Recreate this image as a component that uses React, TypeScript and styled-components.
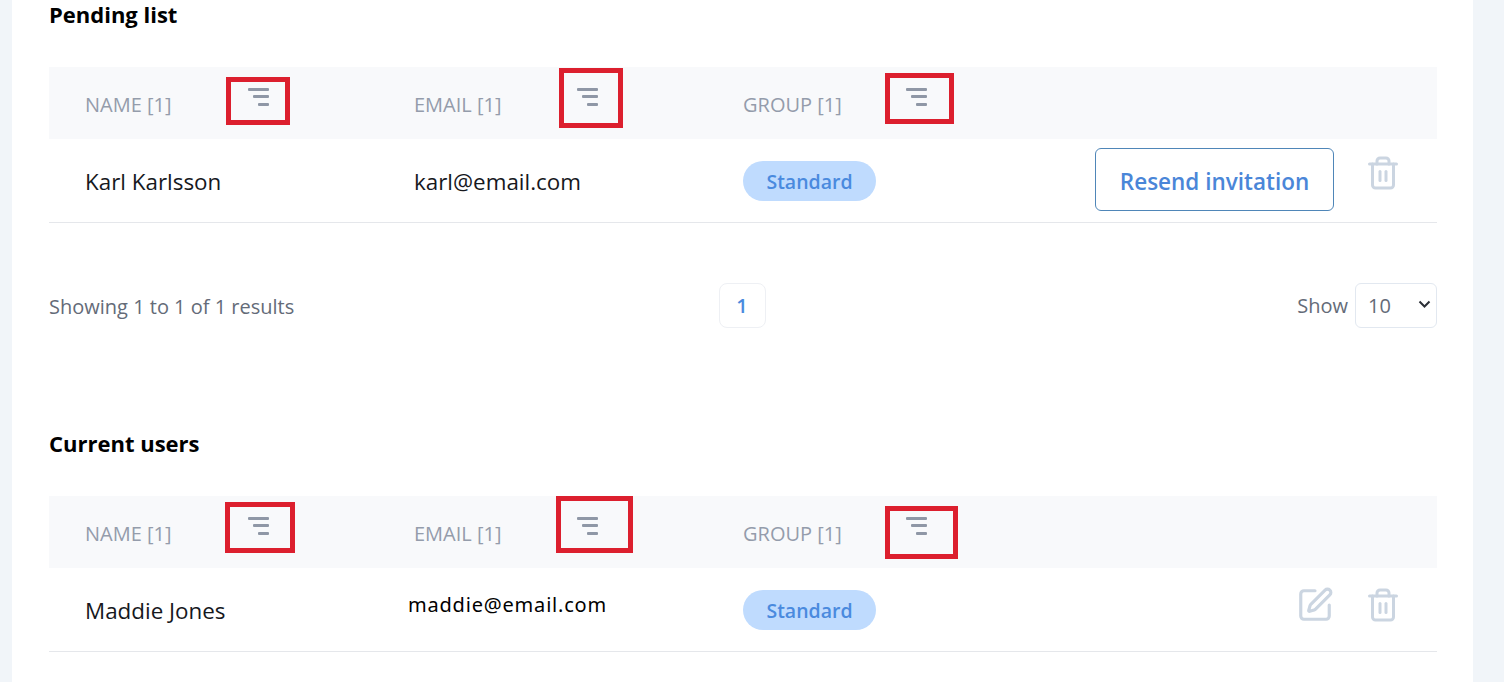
import { SquarePen, Trash2 } from 'lucide-react'
import styled, { createGlobalStyle } from 'styled-components'

type Box = {
  left: number
  top: number
  width: number
  height: number
}

const GlobalStyle = createGlobalStyle`
  html, body {
    margin: 0;
    height: 100%;
    overflow: hidden;
    background: #f1f5f9;
  }
`

const Page = styled.div`
  height: 682px;
  padding: 0 31px 0 12px;
  font-family: 'Open Sans', 'Noto Sans', sans-serif;
  overflow: hidden;
`

const Card = styled.main`
  height: 100%;
  padding: 0 36px 0 37px;
  background: #fff;
`

const SectionTitle = styled.h2`
  height: 30px;
  margin: 0 0 37px;
  font-size: 22px;
  font-weight: 700;
  line-height: 28px;
  color: #000;
`

const HeaderRow = styled.div`
  display: grid;
  grid-template-columns: 329px 329px 329px 1fr;
  align-items: center;
  height: 72px;
  background: #f8f9fb;
`

const HeaderCell = styled.div`
  display: flex;
  align-items: center;
  padding-left: 36px;
  font-size: 20px;
  font-weight: 500;
  color: #949cab;
`

const HeaderLabel = styled.span`
  width: 163px;
  flex: none;
  padding-top: 2px;
  box-sizing: border-box;
`

const FilterWrap = styled.span`
  position: relative;
  display: block;
  width: 21px;
  height: 18px;
  margin-top: -13px;
`

const FilterBars = styled.svg`
  display: block;
`

const Marker = styled.span<{ $box: Box }>`
  position: absolute;
  left: ${(p) => p.$box.left}px;
  top: ${(p) => p.$box.top}px;
  width: ${(p) => p.$box.width}px;
  height: ${(p) => p.$box.height}px;
  box-sizing: border-box;
  border: 5px solid #dc1f2e;
`

const BodyRow = styled.div`
  display: grid;
  grid-template-columns: 329px 329px 329px 1fr;
  align-items: center;
  height: 83px;
  border-bottom: 1px solid #e5e7eb;
`

const Cell = styled.div`
  padding: 1px 0 0 36px;
  font-size: 22.4px;
  color: #16181d;
`

const PastedEmail = styled.div`
  padding: 0 0 10px 30px;
  font-family: 'Noto Sans', 'Open Sans', sans-serif;
  font-size: 20px;
  letter-spacing: 0.8px;
  color: #000;
`

const Badge = styled.span`
  display: inline-flex;
  align-items: center;
  justify-content: center;
  width: 133px;
  height: 40px;
  padding-top: 1px;
  box-sizing: border-box;
  border-radius: 20px;
  background: #bfdbfe;
  font-size: 19.5px;
  font-weight: 600;
  color: #4a8ade;
`

const Actions = styled.div`
  display: flex;
  align-items: center;
  justify-content: flex-end;
  gap: 31px;
  padding-right: 36px;
`

const ResendButton = styled.button`
  width: 239px;
  height: 63px;
  margin-bottom: 2px;
  padding: 4px 0 0;
  border: 1px solid #4f86b8;
  border-radius: 6px;
  background: #fff;
  font-family: inherit;
  font-size: 22.5px;
  font-weight: 600;
  color: #4a86d8;
`

const IconButton = styled.span<{ $lift: number }>`
  display: flex;
  margin-bottom: ${(p) => p.$lift}px;
  color: #cbd5e1;
`

const Pager = styled.div`
  display: grid;
  grid-template-columns: 1fr auto 1fr;
  align-items: center;
  height: 45px;
  margin: 60px 0 101px;
  font-size: 20px;
  color: #646b78;
`

const ResultCount = styled.span`
  padding-top: 2px;
`

const PageButton = styled.span`
  display: flex;
  align-items: center;
  justify-content: center;
  box-sizing: border-box;
  width: 47px;
  height: 45px;
  margin-left: -2px;
  border: 1px solid #eef0f4;
  border-radius: 8px;
  font-weight: 600;
  color: #4a8ade;
`

const ShowGroup = styled.div`
  display: flex;
  align-items: center;
  justify-content: flex-end;
  gap: 7px;
`

const SelectWrap = styled.span`
  position: relative;
  display: block;
`

const PageSize = styled.select`
  display: block;
  box-sizing: border-box;
  width: 82px;
  height: 45px;
  padding: 0 0 0 12px;
  border: 1px solid #e2e8f0;
  border-radius: 6px;
  background: #fff;
  font-family: inherit;
  font-size: 20px;
  color: #646b78;
  appearance: none;
`

const Chevron = styled.svg`
  position: absolute;
  right: 6px;
  top: 17px;
  pointer-events: none;
`

function FilterIcon({ box }: { box: Box }) {
  return (
    <FilterWrap>
      <FilterBars width="21" height="18" viewBox="0 0 21 18">
        <rect x="0" y="0" width="21" height="3" rx="1" fill="#8f97a6" />
        <rect x="5" y="7" width="16" height="3" rx="1" fill="#8f97a6" />
        <rect x="10" y="15" width="11" height="3" rx="1" fill="#8f97a6" />
      </FilterBars>
      <Marker $box={box} />
    </FilterWrap>
  )
}

function Header({ boxes }: { boxes: Box[] }) {
  const labels = ['NAME [1]', 'EMAIL [1]', 'GROUP [1]']
  return (
    <HeaderRow>
      {labels.map((label, i) => (
        <HeaderCell key={label}>
          <HeaderLabel>{label}</HeaderLabel>
          <FilterIcon box={boxes[i]} />
        </HeaderCell>
      ))}
    </HeaderRow>
  )
}

function App() {
  return (
    <Page>
      <GlobalStyle />
      <Card>
        <SectionTitle>Pending list</SectionTitle>
        <Header
          boxes={[
            { left: -22, top: -11, width: 64, height: 48 },
            { left: -18, top: -20, width: 64, height: 60 },
            { left: -21, top: -15, width: 69, height: 51 },
          ]}
        />
        <BodyRow>
          <Cell>Karl Karlsson</Cell>
          <Cell>karl@email.com</Cell>
          <Cell>
            <Badge>Standard</Badge>
          </Cell>
          <Actions>
            <ResendButton>Resend invitation</ResendButton>
            <IconButton $lift={16}>
              <Trash2 size={36} />
            </IconButton>
          </Actions>
        </BodyRow>

        <Pager>
          <ResultCount>Showing 1 to 1 of 1 results</ResultCount>
          <PageButton>1</PageButton>
          <ShowGroup>
            <span>Show</span>
            <SelectWrap>
              <PageSize defaultValue="10">
                <option value="10">10</option>
              </PageSize>
              <Chevron width="13" height="9" viewBox="0 0 13 9">
                <path d="M1.5 1.5 6.5 6.5 11.5 1.5" fill="none" stroke="#2b2f36" strokeWidth="2" />
              </Chevron>
            </SelectWrap>
          </ShowGroup>
        </Pager>

        <SectionTitle>Current users</SectionTitle>
        <Header
          boxes={[
            { left: -23, top: -15, width: 70, height: 51 },
            { left: -21, top: -21, width: 77, height: 57 },
            { left: -21, top: -11, width: 73, height: 53 },
          ]}
        />
        <BodyRow>
          <Cell>Maddie Jones</Cell>
          <PastedEmail>maddie@email.com</PastedEmail>
          <Cell>
            <Badge>Standard</Badge>
          </Cell>
          <Actions>
            <IconButton $lift={10}>
              <SquarePen size={38} />
            </IconButton>
            <IconButton $lift={10}>
              <Trash2 size={36} />
            </IconButton>
          </Actions>
        </BodyRow>
      </Card>
    </Page>
  )
}

export default App
